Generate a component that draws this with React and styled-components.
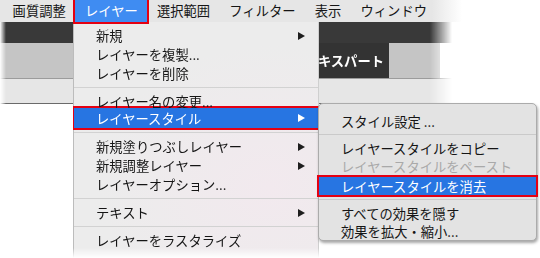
import React from 'react'
import styled, { createGlobalStyle } from 'styled-components'

const GlobalStyle = createGlobalStyle`
  html, body {
    margin: 0;
    padding: 0;
    background: #ffffff;
  }
`

const FONT = `"Noto Sans CJK JP", "Noto Sans", sans-serif`
const RED = '#e50012'
const BLUE = '#2775e2'

const Page = styled.div`
  position: relative;
  width: 540px;
  height: 258px;
  overflow: hidden;
  background: #ffffff;
  font-family: ${FONT};
  font-size: 13.3px;
  color: #151515;
`

const MenuBar = styled.div`
  display: flex;
  align-items: stretch;
  height: 22px;
  padding-left: 3px;
  background: linear-gradient(to right, #e6e6e6 0, #e6e6e6 432px, #ffffff 462px);
`

const BarItem = styled.div`
  position: relative;
  z-index: ${p => (p.$active ? 3 : 0)};
  padding: 0 9.6px;
  line-height: 22px;
  white-space: nowrap;
  color: ${p => (p.$active ? '#ffffff' : '#151515')};
  background: ${p => (p.$active ? '#3f8cf2' : 'transparent')};
  box-shadow: ${p => (p.$active ? `0 0 0 2px ${RED}` : 'none')};
`

/* toolbar panels that sit behind the open menus */
const Workspace = styled.div`
  display: flex;
  flex-direction: column;
  mask-image: linear-gradient(to right, transparent 0, #000 6px, #000 430px, transparent 452px);
`

const DarkBand = styled.div`
  height: 21px;
  background: #393939;
`

const MidBand = styled.div`
  display: flex;
  height: 35px;
`

const GreyPanel = styled.div`
  flex: 0 0 ${p => p.$w}px;
  background: #c5c5c5;
`

const TabPanel = styled.div`
  flex: 0 0 139px;
  display: flex;
  align-items: center;
  justify-content: flex-end;
  padding-right: 5px;
  box-sizing: border-box;
  background: #333333;
  color: #ffffff;
  font-weight: 700;
  font-size: 13.3px;
`

const LightBand = styled.div`
  height: 24px;
  background: #e6e6e6;
  border-top: 1px solid #9c9c9c;
  border-bottom: 1px solid #6a6a6a;
`

/* dropdown menus */
const MainMenu = styled.div`
  position: absolute;
  left: 73px;
  top: 22px;
  width: 246px;
  bottom: 0;
  z-index: 2;
  box-sizing: border-box;
  padding-top: 4px;
  background: radial-gradient(ellipse 70% 60% at 80% 70%, #f2e9ee 0%, #ececec 100%);
  border-left: 1px solid #bcbcbc;
  border-right: 1px solid #cfcfcf;
  mask-image: linear-gradient(to bottom, #000 226px, transparent 236px);
`

const SubMenu = styled.div`
  position: absolute;
  left: 318px;
  top: 103px;
  width: 219px;
  z-index: 2;
  box-sizing: border-box;
  padding-top: 8px;
  background: #e3e3e3;
  border: 1px solid #ababab;
  border-radius: 5px;
  box-shadow: 1px 2px 3px rgba(0, 0, 0, 0.35);
`

const Row = styled.div`
  display: flex;
  align-items: center;
  justify-content: space-between;
  height: ${p => p.$h}px;
  padding: 0 13px 0 22px;
  margin-top: ${p => p.$mt || 0}px;
  margin-bottom: ${p => p.$mb || 0}px;
  white-space: nowrap;
  color: ${p => (p.$hl ? '#ffffff' : p.$off ? '#a9a9a9' : '#151515')};
  background: ${p => (p.$hl ? BLUE : 'transparent')};
  box-shadow: ${p => (p.$hl ? `0 0 0 2px ${RED}` : 'none')};
`

/* row partly hidden under the highlighted one below it */
const CutRow = styled(Row)`
  align-items: flex-start;
  line-height: 19px;
  overflow: hidden;
`

const Arrow = styled.span`
  width: 0;
  height: 0;
  border-left: 7px solid ${p => (p.$light ? '#ffffff' : '#1e1e1e')};
  border-top: 4.5px solid transparent;
  border-bottom: 4.5px solid transparent;
`

const Separator = styled.div`
  height: 1px;
  margin: 4px 0;
  background: #d2d2d2;
`

const SubSeparator = styled(Separator)`
  background: #cacaca;
`

const barItems = ['画質調整', 'レイヤー', '選択範囲', 'フィルター', '表示', 'ウィンドウ']

export default function App() {
  return (
    <>
      <GlobalStyle />
      <Page>
        <MenuBar>
          {barItems.map(label => (
            <BarItem key={label} $active={label === 'レイヤー'}>{label}</BarItem>
          ))}
        </MenuBar>

        <Workspace>
          <DarkBand />
          <MidBand>
            <GreyPanel $w={250} />
            <TabPanel>エキスパート</TabPanel>
            <GreyPanel $w={51} />
          </MidBand>
          <LightBand />
        </Workspace>

        <MainMenu>
          <Row $h={19}>新規<Arrow /></Row>
          <Row $h={19}>レイヤーを複製...</Row>
          <Row $h={19}>レイヤーを削除</Row>
          <Separator />
          <CutRow $h={16}>レイヤー名の変更...</CutRow>
          <Row $h={20} $hl $mb={3}>レイヤースタイル<Arrow $light /></Row>
          <Separator />
          <Row $h={19}>新規塗りつぶしレイヤー<Arrow /></Row>
          <Row $h={19}>新規調整レイヤー<Arrow /></Row>
          <Row $h={19}>レイヤーオプション...</Row>
          <Separator />
          <Row $h={19}>テキスト<Arrow /></Row>
          <Separator />
          <Row $h={19}>レイヤーをラスタライズ</Row>
        </MainMenu>

        <SubMenu>
          <Row $h={18}>スタイル設定 ...</Row>
          <SubSeparator />
          <Row $h={18}>レイヤースタイルをコピー</Row>
          <Row $h={18} $off>レイヤースタイルをペースト</Row>
          <Row $h={18} $hl $mt={2} $mb={4}>レイヤースタイルを消去</Row>
          <SubSeparator />
          <Row $h={18}>すべての効果を隠す</Row>
          <Row $h={18}>効果を拡大・縮小...</Row>
        </SubMenu>
      </Page>
    </>
  )
}
